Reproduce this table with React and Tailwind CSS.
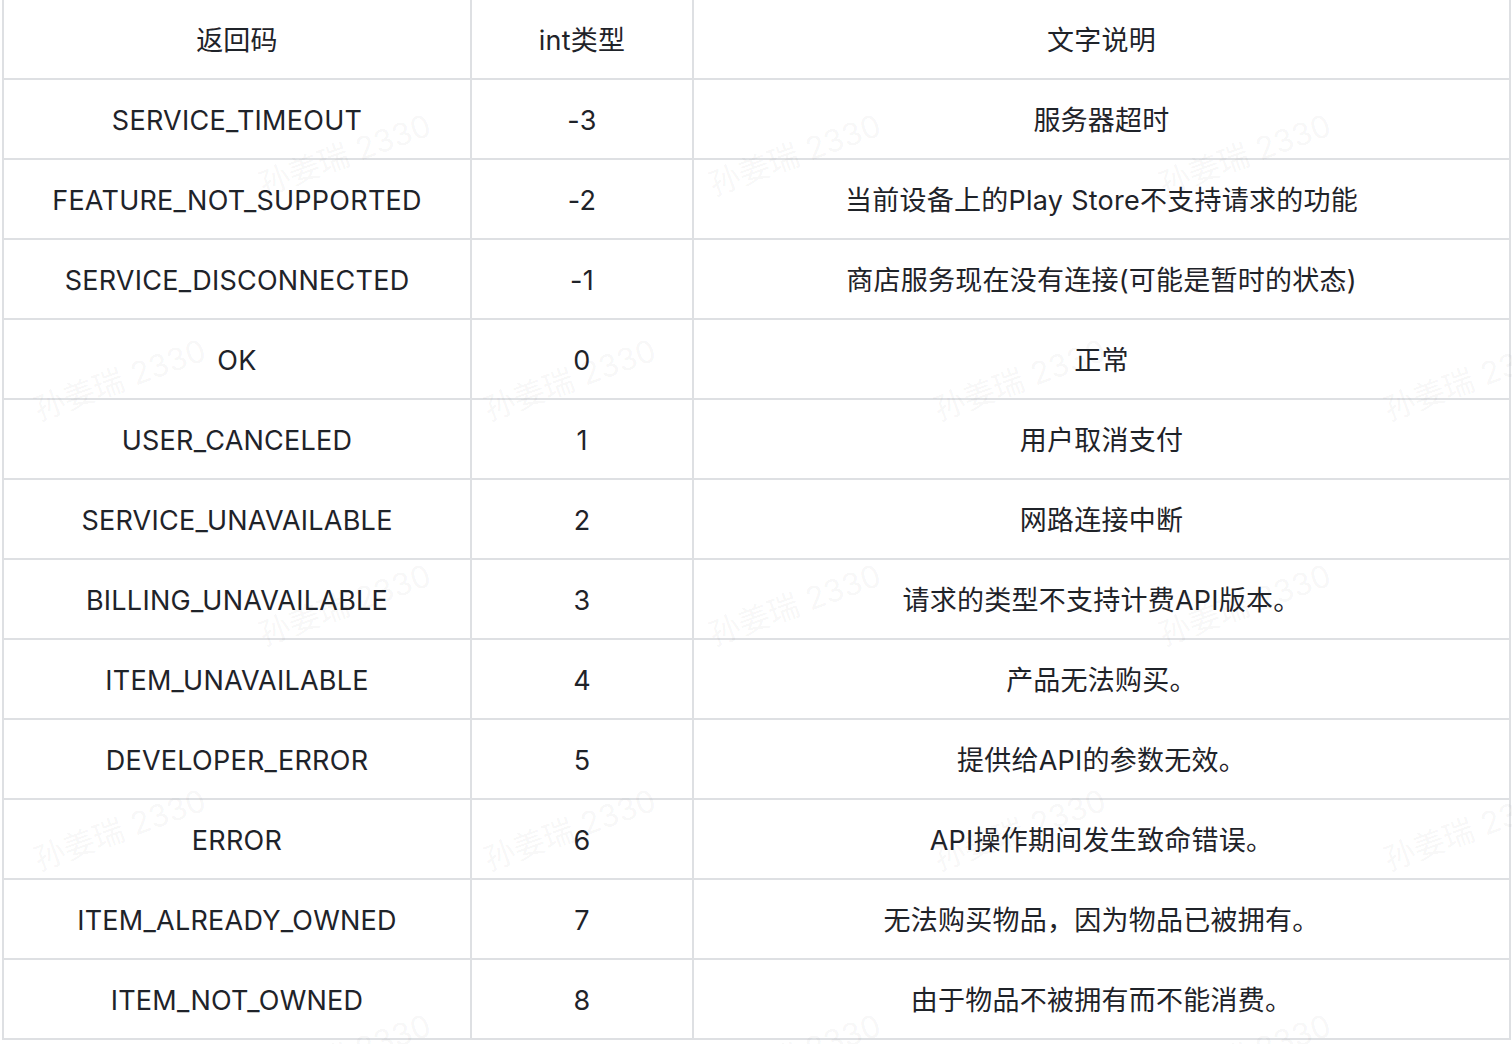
const rows = [
  ['SERVICE_TIMEOUT', '-3', '服务器超时'],
  ['FEATURE_NOT_SUPPORTED', '-2', '当前设备上的Play Store不支持请求的功能'],
  ['SERVICE_DISCONNECTED', '-1', '商店服务现在没有连接(可能是暂时的状态)'],
  ['OK', '0', '正常'],
  ['USER_CANCELED', '1', '用户取消支付'],
  ['SERVICE_UNAVAILABLE', '2', '网路连接中断'],
  ['BILLING_UNAVAILABLE', '3', '请求的类型不支持计费API版本。'],
  ['ITEM_UNAVAILABLE', '4', '产品无法购买。'],
  ['DEVELOPER_ERROR', '5', '提供给API的参数无效。'],
  ['ERROR', '6', 'API操作期间发生致命错误。'],
  ['ITEM_ALREADY_OWNED', '7', '无法购买物品，因为物品已被拥有。'],
  ['ITEM_NOT_OWNED', '8', '由于物品不被拥有而不能消费。'],
]

// watermark centres, repeating every 450px with a 225px offset on alternate lines
const marks = []
for (let r = 0; r < 5; r++) {
  const y = 155 + r * 225
  const start = r % 2 === 0 ? 345 : 120
  for (let x = start; x < 1700; x += 450) marks.push([x, y])
}

function Cell({ children, w }) {
  return (
    <div className={`${w} flex h-[80px] items-center justify-center border-r-2 border-b-2 border-[#dee0e3] pt-1`}>
      {children}
    </div>
  )
}

function Row({ cells }) {
  return (
    <div className="flex">
      <Cell w="w-[468px]">{cells[0]}</Cell>
      <Cell w="w-[222px]">{cells[1]}</Cell>
      <Cell w="w-[817px]">{cells[2]}</Cell>
    </div>
  )
}

export default function App() {
  return (
    <div
      className="relative h-[1044px] w-[1512px] overflow-hidden bg-white text-[27px] tracking-[0.25px] text-[#1f2329]"
      style={{ fontFamily: 'Inter, "Noto Sans CJK SC", sans-serif' }}
    >
      <div className="ml-[2px] w-[1509px] border-l-2 border-[#dee0e3]">
        <Row cells={['返回码', 'int类型', '文字说明']} />
        {rows.map((r) => (
          <Row key={r[0]} cells={r} />
        ))}
      </div>

      {/* faint diagonal watermark */}
      <div className="pointer-events-none absolute inset-0">
        {marks.map(([x, y]) => (
          <span
            key={`${x}-${y}`}
            className="absolute -translate-x-1/2 -translate-y-1/2 -rotate-[20deg] whitespace-nowrap text-[31px] text-[#1f2329]/[0.05]"
            style={{ left: x, top: y }}
          >
            孙姜瑞 2330
          </span>
        ))}
      </div>
    </div>
  )
}
